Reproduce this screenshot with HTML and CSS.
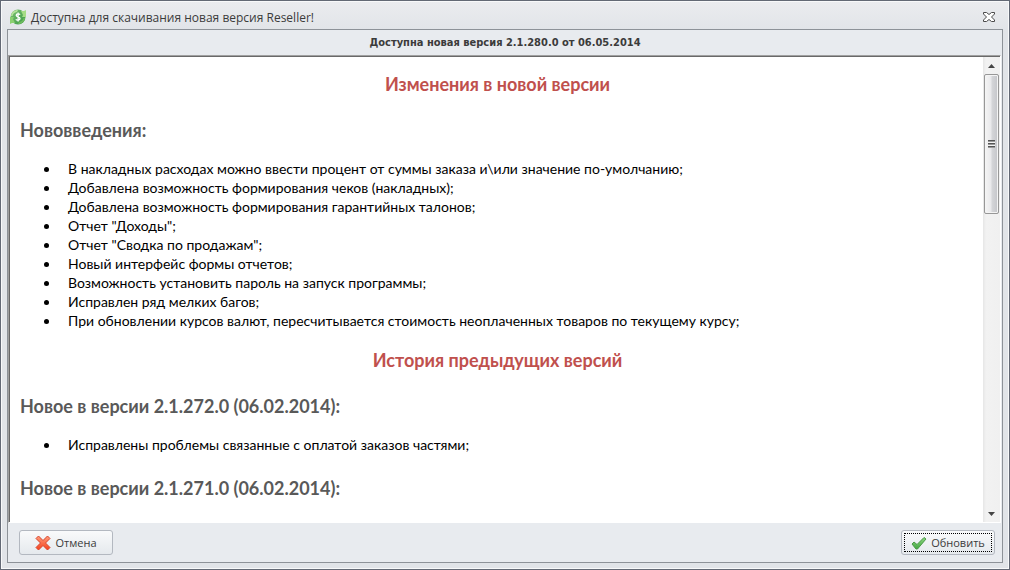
FILE: index.html
```html
<!DOCTYPE html>
<html lang="ru">
<head>
    <meta charset="UTF-8">
    <title>Доступна для скачивания новая версия Reseller!</title>
    <link rel="stylesheet" href="styles.css">
</head>
<body>

    <div class="window">
        <!-- Заголовок окна -->
        <div class="title-bar">
            <svg class="app-icon" width="16" height="16" viewBox="0 0 16 16">
                <defs>
                    <linearGradient id="coin" x1="0" y1="0" x2="1" y2="1">
                        <stop offset="0" stop-color="#7cc072"/>
                        <stop offset="1" stop-color="#3a9a44"/>
                    </linearGradient>
                </defs>
                <circle cx="8" cy="8" r="7.500" fill="url(#coin)"/>
                <path d="M0 15V8h4L3 10l2 4H2z" fill="#8bd070"/>
                <path d="M1 7C1.500 3 4.500 1 8 1l-1 2C4.500 3.500 3 4.500 2.500 7z" fill="#b5e29a"/>
                <path d="M16 1v7h-4l1-2-2-4h3z" fill="#a5dc85"/>
                <path d="M15 9c-.5 4-3.500 6-7 6l1-2c2.500-.5 4-1.500 4.500-4z" fill="#6dbb5e"/>
                <path d="M10 5.800C9.400 4.700 6.200 4.400 6.200 6.300c0 1.800 3.800 1.400 3.800 3.300 0 1.900-3.200 1.900-4.200.7M8.100 3.400v9.200" fill="none" stroke="#fff" stroke-width="1.300"/>
            </svg>
            <span class="title-text">Доступна для скачивания новая версия Reseller!</span>
            <button type="button" class="close-button" aria-label="Закрыть">
                <svg width="12" height="10" viewBox="0 0 12 10">
                    <path d="M.5.5h3L6 2.500 8.500.5h3v1.500L8.500 5l3 3v1.500h-3L6 7.500 3.500 9.500h-3V8l3-3-3-3z" fill="#fff" stroke="#4a4a4a"/>
                </svg>
            </button>
        </div>

        <div class="panel">
            <div class="version">Доступна новая версия 2.1.280.0 от 06.05.2014</div>

            <!-- Список изменений -->
            <div class="viewer">
                <div class="document">
                    <h1>Изменения в новой версии</h1>
                    <h2>Нововведения:</h2>
                    <ul>
                        <li>В накладных расходах можно ввести процент от суммы заказа и\или значение по-умолчанию;</li>
                        <li>Добавлена возможность формирования чеков (накладных);</li>
                        <li>Добавлена возможность формирования гарантийных талонов;</li>
                        <li>Отчет "Доходы";</li>
                        <li>Отчет "Сводка по продажам";</li>
                        <li>Новый интерфейс формы отчетов;</li>
                        <li>Возможность установить пароль на запуск программы;</li>
                        <li>Исправлен ряд мелких багов;</li>
                        <li>При обновлении курсов валют, пересчитывается стоимость неоплаченных товаров по текущему курсу;</li>
                    </ul>
                    <h1>История предыдущих версий</h1>
                    <h2>Новое в версии 2.1.272.0 (06.02.2014):</h2>
                    <ul>
                        <li>Исправлены проблемы связанные с оплатой заказов частями;</li>
                    </ul>
                    <h2>Новое в версии 2.1.271.0 (06.02.2014):</h2>
                </div>
                <div class="scrollbar">
                    <svg class="arrow" width="7" height="4" viewBox="0 0 7 4"><path d="M0 4 3.500 0 7 4z" fill="#444"/></svg>
                    <div class="thumb">
                        <span class="grip"></span>
                    </div>
                    <svg class="arrow arrow-down" width="7" height="4" viewBox="0 0 7 4"><path d="M0 0 3.500 4 7 0z" fill="#444"/></svg>
                </div>
            </div>

            <!-- Кнопки -->
            <div class="buttons">
                <button type="button" class="button">
                    <svg width="16" height="16" viewBox="0 0 16 16">
                        <defs>
                            <linearGradient id="red" x1="0" y1="0" x2="0" y2="1">
                                <stop offset="0" stop-color="#ff9d7c"/>
                                <stop offset="1" stop-color="#f4401c"/>
                            </linearGradient>
                        </defs>
                        <path d="M1 3.500 3.500 1 8 5.500 12.500 1 15 3.500 10.500 8 15 12.500 12.500 15 8 10.500 3.500 15 1 12.500 5.500 8z" fill="url(#red)" stroke="#d8432b" stroke-linejoin="round"/>
                    </svg>
                    Отмена
                </button>
                <button type="button" class="button button-default">
                    <svg width="16" height="16" viewBox="0 0 16 16">
                        <defs>
                            <linearGradient id="green" x1="0" y1="0" x2="0" y2="1">
                                <stop offset="0" stop-color="#8ed67f"/>
                                <stop offset="1" stop-color="#43a842"/>
                            </linearGradient>
                        </defs>
                        <path d="M1 9 3 7l3 2.500L13 2.500l2 1.500L6.500 14H5z" fill="url(#green)" stroke="#4b9a48" stroke-linejoin="round"/>
                    </svg>
                    Обновить
                </button>
            </div>
        </div>
    </div>

</body>
</html>
```
FILE: styles.css
```css
* {
    box-sizing: border-box;
}

body {
    margin: 0;
    font-family: "Open Sans", "Noto Sans", sans-serif;
    font-size: 12px;
    color: #3b3b3b;
}

.window {
    display: flex;
    flex-direction: column;
    height: 100vh;
    padding: 0 6px 6px;
    border: 1px solid #636975;
    background: linear-gradient(#ebecef, #e1e4e8 30px);
    box-shadow: inset 0 0 0 1px #f8f9fa;
}

.title-bar {
    display: flex;
    align-items: center;
    flex: none;
    height: 28px;
    padding: 4px 8px 0 3px;
}

.title-text {
    flex: 1;
    margin-left: 5px;
}

.close-button {
    display: flex;
    padding: 0;
    border: none;
    background: none;
}

.panel {
    display: flex;
    flex-direction: column;
    flex: 1;
    min-height: 0;
    border: 1px solid #8d9298;
    background-color: #e8ebef;
}

.version {
    flex: none;
    padding-top: 1px;
    font-family: "DejaVu Sans Condensed", "DejaVu Sans", sans-serif;
    font-size: 11px;
    line-height: 24px;
    font-weight: bold;
    text-align: center;
}

.viewer {
    display: flex;
    flex: 1;
    min-height: 0;
    margin-right: 1px;
    border: 1px solid #a0a0a0;
    border-right-color: #fff;
    border-bottom-color: #fff;
    background-color: #fff;
    box-shadow: inset 1px 1px #696969;
}

.document {
    flex: 1;
    overflow: hidden;
    padding: 16px 8px 0 11px;
    font-family: Lato, "Open Sans", sans-serif;
    font-size: 14px;
    line-height: 19px;
    color: #000;
}

.document h1,
.document h2 {
    margin: 0;
    font-size: 18px;
    line-height: 24px;
}

.document h1 {
    color: #c0504d;
    text-align: center;
}

.document h2 {
    margin: 22px 0 17px;
    color: #595959;
}

.document ul {
    margin: 0 0 18px;
    padding-left: 48px;
    list-style: none;
}

.document li::before {
    content: "";
    float: left;
    width: 5px;
    height: 5px;
    margin: 8px 0 0 -24px;
    border-radius: 50%;
    background-color: #000;
}

.scrollbar {
    display: flex;
    flex-direction: column;
    align-items: center;
    flex: none;
    width: 17px;
    margin-top: 1px;
    background: linear-gradient(to right, #e6e6e6, #f2f2f2 3px, #f0f0f0);
}

.arrow {
    flex: none;
    margin: 7px 0 6px;
}

.arrow-down {
    margin-top: auto;
}

.thumb {
    display: flex;
    align-items: center;
    justify-content: center;
    width: 15px;
    height: 30%;
    border: 1px solid #979797;
    border-radius: 2px;
    background: linear-gradient(to right, #f5f5f5, #e9e9eb 45%, #d4d5d8 55%, #c4c5c9);
    box-shadow: inset 0 0 0 1px #f4f4f4;
}

.grip {
    width: 7px;
    height: 8px;
    background: repeating-linear-gradient(#555 0 1px, #999 1px 2px, #f4f4f4 2px 3px);
}

.buttons {
    display: flex;
    justify-content: space-between;
    flex: none;
    padding: 7px 7px 7px 11px;
}

.button {
    display: flex;
    align-items: center;
    justify-content: center;
    gap: 4px;
    width: 94px;
    height: 25px;
    padding: 0;
    border: 1px solid #b3b8c0;
    border-radius: 3px;
    background: linear-gradient(#f9fafb, #e5e9ed);
    font-family: "Open Sans", "Noto Sans", sans-serif;
    font-size: 11px;
    color: #3b3b3b;
}

.button-default {
    outline: 1px dotted #000;
    outline-offset: -4px;
}
```
